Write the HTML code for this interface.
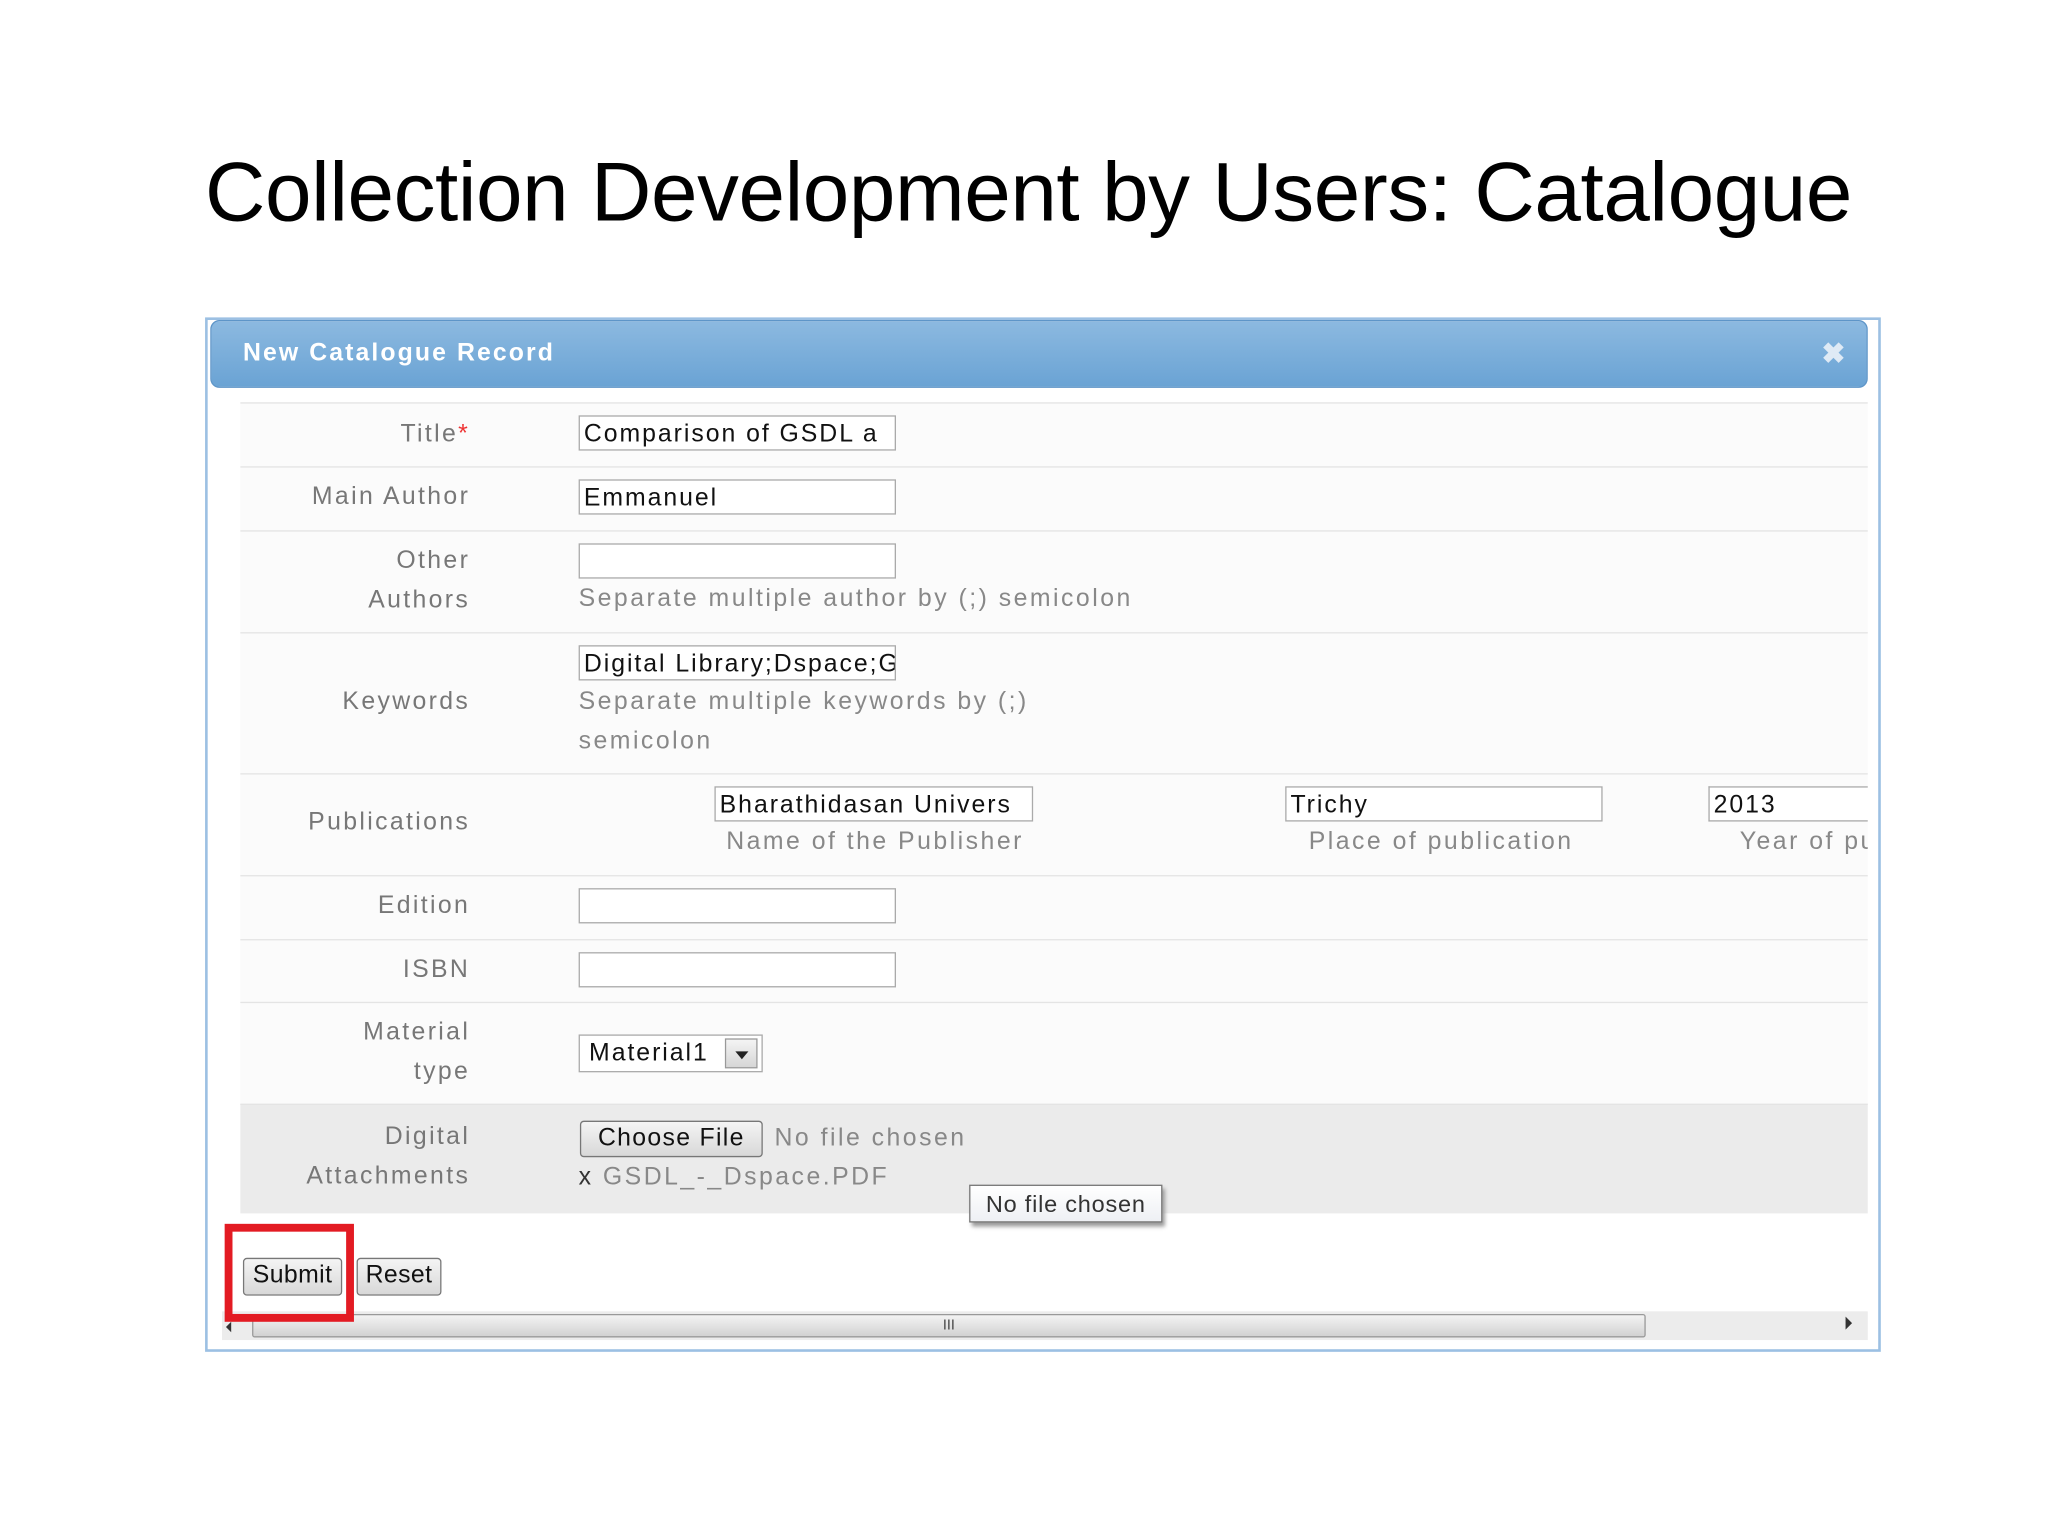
<!DOCTYPE html>
<html><head><meta charset="utf-8"><style>
html,body{margin:0;padding:0;background:#fff;}
body{width:2048px;height:1536px;overflow:hidden;position:relative;}
#s{position:absolute;left:0;top:0;width:1568px;height:1176px;transform:scale(1.30612);transform-origin:0 0;font-family:"Liberation Sans",sans-serif;}
.a{position:absolute;}
h1{position:absolute;left:157px;top:110px;margin:0;font-weight:normal;font-size:64px;color:#000;white-space:nowrap;letter-spacing:-0.3px;}
.frame{left:157px;top:243px;width:1279px;height:788px;border:2px solid #9cc0e3;}
.hdr{left:161px;top:245px;width:1267px;height:50px;border-radius:7px;background:linear-gradient(#8cb9e0,#6aa3d4);border:1px solid #5e95c8;}
.hdr span{position:absolute;left:24px;top:14px;color:#fff;font-weight:bold;font-size:19px;letter-spacing:1.6px;}
.hdr b{position:absolute;right:16px;top:12px;color:#dfeaf5;font-size:22px;}
.row{position:absolute;left:184px;width:1246px;border-top:1px solid #e4e4e4;background:#fbfbfb;}
.lbl{position:absolute;text-align:right;color:#777;font-size:19px;line-height:30px;letter-spacing:1.8px;}
.inp{position:absolute;height:27px;border:1px solid #aaa;background:#fff;font-size:19px;line-height:27px;padding-left:3px;overflow:hidden;white-space:nowrap;color:#111;box-sizing:border-box;letter-spacing:1.5px;}
.hint{position:absolute;color:#888;font-size:19px;line-height:30px;white-space:nowrap;letter-spacing:1.9px;}
.btn{position:absolute;border:1px solid #777;border-radius:3px;background:linear-gradient(#f4f4f4,#d8d8d8);font-size:19px;line-height:26px;text-align:center;color:#111;box-sizing:border-box;letter-spacing:1px;}
</style></head><body><div id="s">
<h1>Collection Development by Users: Catalogue</h1>
<div class="a frame"></div>
<div class="a hdr"><span>New Catalogue Record</span><b>✖</b></div>

<div class="row" style="top:308px;height:49px"></div>
<div class="row" style="top:357px;height:49px"></div>
<div class="row" style="top:406px;height:78px"></div>
<div class="row" style="top:484px;height:108px"></div>
<div class="row" style="top:592px;height:78px"></div>
<div class="row" style="top:670px;height:49px"></div>
<div class="row" style="top:719px;height:48px"></div>
<div class="row" style="top:767px;height:78px"></div>
<div class="row" style="top:845px;height:83px;background:#ebebeb"></div>

<div class="lbl" style="top:318px;left:0;width:360px">Title<span style="color:#e33">*</span></div>
<div class="inp" style="left:443px;top:318px;width:243px">Comparison of GSDL a</div>
<div class="lbl" style="top:366px;left:0;width:360px">Main Author</div>
<div class="inp" style="left:443px;top:367px;width:243px">Emmanuel</div>
<div class="lbl" style="top:415px;left:0;width:360px">Other<br>Authors</div>
<div class="inp" style="left:443px;top:416px;width:243px"></div>
<div class="hint" style="left:443px;top:444px">Separate multiple author by (;) semicolon</div>
<div class="lbl" style="top:523px;left:0;width:360px">Keywords</div>
<div class="inp" style="left:443px;top:494px;width:243px">Digital Library;Dspace;G</div>
<div class="hint" style="left:443px;top:523px">Separate multiple keywords by (;)<br>semicolon</div>
<div class="lbl" style="top:615px;left:0;width:360px">Publications</div>
<div class="inp" style="left:547px;top:602px;width:244px">Bharathidasan Univers</div>
<div class="hint" style="left:556px;top:630px">Name of the Publisher</div>
<div class="inp" style="left:984px;top:602px;width:243px">Trichy</div>
<div class="hint" style="left:1002px;top:630px">Place of publication</div>
<div class="inp" style="left:1308px;top:602px;width:122px;border-right:none">2013</div>
<div class="hint" style="left:1332px;top:630px;width:98px;overflow:hidden">Year of publication</div>
<div class="lbl" style="top:679px;left:0;width:360px">Edition</div>
<div class="inp" style="left:443px;top:680px;width:243px"></div>
<div class="lbl" style="top:728px;left:0;width:360px">ISBN</div>
<div class="inp" style="left:443px;top:729px;width:243px"></div>
<div class="lbl" style="top:776px;left:0;width:360px">Material<br>type</div>
<div class="inp" style="left:443px;top:792px;width:141px;height:29px;line-height:27px;padding-left:7px">Material1</div>
<div class="a" style="left:555px;top:795px;width:25px;height:23px;border:1px solid #999;background:linear-gradient(#f4f4f4,#d6d6d6);box-sizing:border-box"><div class="a" style="left:7px;top:9px;border-left:5px solid transparent;border-right:5px solid transparent;border-top:6px solid #222"></div></div>
<div class="lbl" style="top:856px;left:0;width:360px">Digital<br>Attachments</div>
<div class="btn" style="left:444px;top:858px;width:140px;height:28px">Choose File</div>
<div class="hint" style="left:593px;top:857px">No file chosen</div>
<div class="hint" style="left:443px;top:887px"><span style="color:#333">x</span> GSDL_-_Dspace.PDF</div>
<div class="a" style="left:742px;top:907px;width:148px;height:29px;border:1px solid #777;background:linear-gradient(#fff,#eef0f4);box-shadow:2px 3px 3px #999;font-size:18px;line-height:28px;text-align:center;color:#333;box-sizing:border-box;letter-spacing:0.6px">No file chosen</div>

<div class="a" style="left:170px;top:1004px;width:1260px;height:22px;background:#ececec"></div>
<div class="a" style="left:193px;top:1006px;width:1067px;height:18px;border:1px solid #999;border-radius:2px;background:linear-gradient(#f3f3f3,#d2d2d2);box-sizing:border-box;text-align:center;font-size:11px;line-height:16px;color:#444">III</div>
<div class="a" style="left:173px;top:1012px;border-top:4px solid transparent;border-bottom:4px solid transparent;border-right:4px solid #333"></div>
<div class="a" style="left:1413px;top:1008px;border-top:5px solid transparent;border-bottom:5px solid transparent;border-left:5px solid #333"></div>

<div class="btn" style="left:186px;top:963px;width:76px;height:29px;letter-spacing:0.3px">Submit</div>
<div class="btn" style="left:273px;top:963px;width:65px;height:29px;letter-spacing:0.3px">Reset</div>
<div class="a" style="left:172px;top:937px;width:99px;height:75px;border:6px solid #e31b23;box-sizing:border-box"></div>
</div></body></html>
